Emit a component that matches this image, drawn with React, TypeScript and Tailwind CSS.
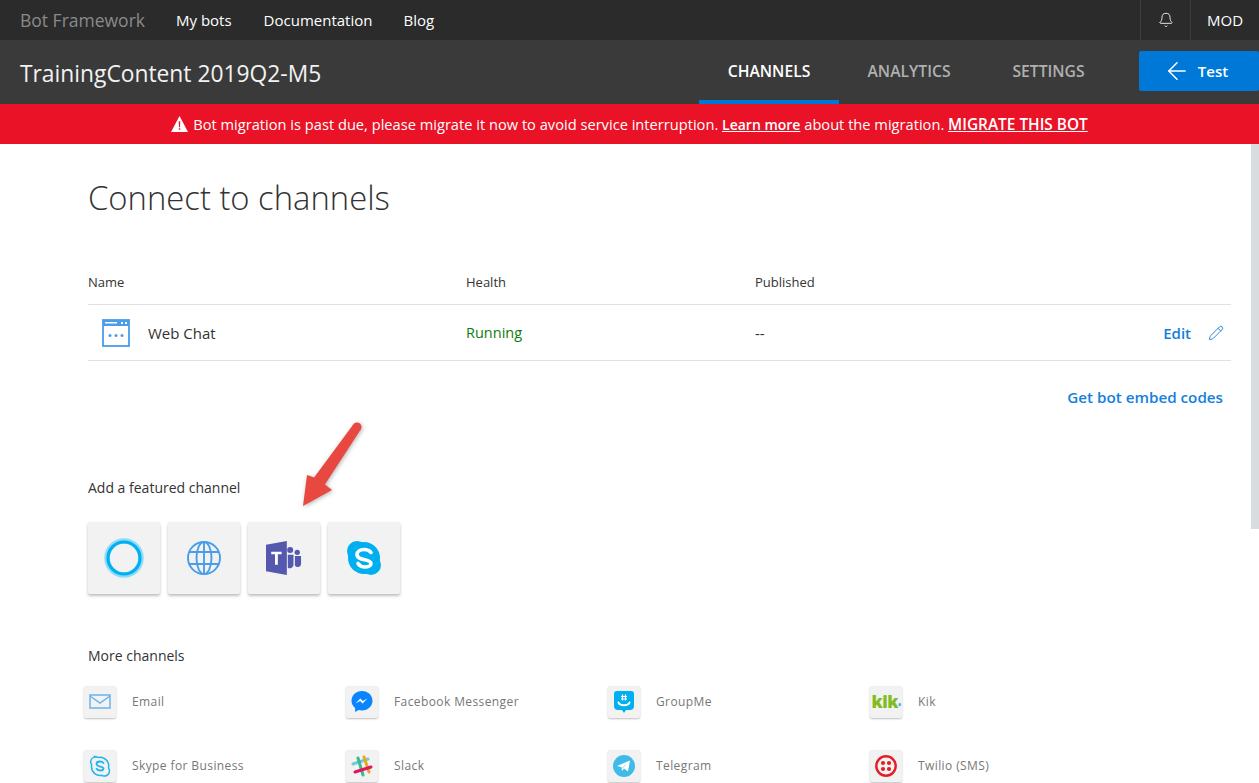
import React from "react";
import { ArrowLeft, Bell, Pencil } from "lucide-react";

const font = "font-['Open_Sans','Noto_Sans',sans-serif]";

function Tile({ children }: { children: React.ReactNode }) {
  return (
    <div className="flex h-[72px] w-[72px] items-center justify-center rounded-[2px] bg-[#f2f2f2] shadow-[0_2px_3px_rgba(0,0,0,0.25)]">
      {children}
    </div>
  );
}

function SmallTile({ children }: { children: React.ReactNode }) {
  return (
    <div className="flex h-8 w-8 shrink-0 items-center justify-center rounded-[2px] bg-[#f2f2f2] shadow-[0_1px_2px_rgba(0,0,0,0.25)]">
      {children}
    </div>
  );
}

function Channel({ name, icon }: { name: string; icon: React.ReactNode }) {
  return (
    <div className="flex h-8 w-[262px] items-center gap-4">
      <SmallTile>{icon}</SmallTile>
      <span className="text-[12px] tracking-[0.4px] text-[#777]">{name}</span>
    </div>
  );
}

const SkypeFilled = () => (
  <svg width="38" height="38" viewBox="0 0 38 38">
    <circle cx="12" cy="12" r="10" fill="#00aff0" />
    <circle cx="26" cy="26" r="10" fill="#00aff0" />
    <circle cx="19" cy="19" r="16" fill="#00aff0" />
    <path d="M26 13.500c-1.500-2-4-3-7-3-4 0-7 2-7 5 0 6.500 14 4 14 9 0 2-2.500 3.500-6 3.500-3 0-5.500-1.200-7-3.500" fill="none" stroke="#fff" strokeWidth="3.600" strokeLinecap="round" />
  </svg>
);

export default function App() {
  return (
    <div className={`${font} flex h-[783px] w-[1259px] flex-col overflow-hidden bg-white`}>
      {/* Top nav */}
      <div className="flex h-10 shrink-0 items-center bg-[#2b2b2b] pl-5 text-[15px] text-white">
        <span className="w-[156px] text-[17.5px] text-[#8a8a8a]">Bot Framework</span>
        <span className="mr-[32px]">My bots</span>
        <span className="mr-[31px]">Documentation</span>
        <span>Blog</span>
        <div className="ml-auto flex h-full">
          <div className="flex w-[51px] items-center justify-center border-x border-[#3d3d3d]">
            <Bell size={16} strokeWidth={1.3} />
          </div>
          <div className="flex w-[68px] items-center justify-center">MOD</div>
        </div>
      </div>

      {/* Bot header */}
      <div className="flex h-16 shrink-0 items-stretch bg-[#3a3a3a] pl-5">
        <div className="flex items-center pt-[4px] text-[22.8px] text-[#f2f2f2]">TrainingContent 2019Q2-M5</div>
        <div className="ml-auto flex text-[15.7px] font-semibold">
          <div className="flex w-[140px] items-center justify-center border-b-4 border-[#0078d7] pt-[4px] text-white">CHANNELS</div>
          <div className="flex w-[140px] items-center justify-center text-[#b0b0b0]">ANALYTICS</div>
          <div className="flex w-[139px] items-center justify-center text-[#b0b0b0]">SETTINGS</div>
        </div>
        <div className="ml-[21px] mt-[11px] flex h-10 w-[120px] items-center justify-center gap-[7px] rounded-[2px] bg-[#0078d7] pr-[7px] text-[15px] font-semibold text-white">
          <ArrowLeft size={28} strokeWidth={1.3} />
          Test
        </div>
      </div>

      {/* Migration banner */}
      <div className="flex h-10 shrink-0 items-center justify-center gap-[5px] bg-[#ea1226] text-[14.65px] text-white">
        <svg width="17" height="16" viewBox="0 0 16 15">
          <path d="M8 0L16 15H0Z" fill="#fff" />
          <path d="M7.300 5h1.400l-.2 5.500h-1zM7.300 11.500h1.400V13H7.300z" fill="#ea1226" />
        </svg>
        <span className="pt-px">
          Bot migration is past due, please migrate it now to avoid service interruption.{" "}
          <span className="text-[14px] font-semibold underline">Learn more</span> about the migration.{" "}
          <span className="text-[15.4px] font-semibold underline">MIGRATE THIS BOT</span>
        </span>
      </div>

      <div className="flex min-h-0 flex-1">
        <main className="relative min-w-0 flex-1 pl-[88px] pr-[20px]">
          <h1 className="mt-8 text-[32.8px] font-light leading-[44px] text-[#333]">Connect to channels</h1>

          {/* Channels table */}
          <div className="mt-[46px] flex h-[39px] items-center border-b border-[#e1e1e1] pb-[4px] text-[13px] text-[#333]">
            <span className="w-[378px]">Name</span>
            <span className="w-[289px]">Health</span>
            <span>Published</span>
          </div>
          <div className="flex h-14 items-center border-b border-[#e1e1e1] pt-px text-[15px] text-[#333]">
            <div className="flex w-[378px] items-center gap-[18px] pl-[14px]">
              <svg width="28" height="28" viewBox="0 0 28 28">
                <rect x="1" y="1" width="26" height="26" fill="none" stroke="#4a9de8" strokeWidth="1.800" />
                <rect x="1" y="1" width="26" height="6" fill="#4a9de8" />
                <rect x="3" y="3" width="12" height="1.500" fill="#fff" />
                <rect x="19" y="3" width="2" height="2" fill="#fff" />
                <rect x="23" y="3" width="2" height="2" fill="#fff" />
                <circle cx="8" cy="16.500" r="1.500" fill="#4a9de8" />
                <circle cx="14" cy="16.500" r="1.500" fill="#4a9de8" />
                <circle cx="20" cy="16.500" r="1.500" fill="#4a9de8" />
              </svg>
              Web Chat
            </div>
            <span className="w-[289px] text-[14.5px] text-[#107c10]">Running</span>
            <span>--</span>
            <div className="ml-auto flex items-center gap-[17px] pr-[7px] font-semibold text-[#1380dc]">
              <span>Edit</span>
              <Pencil size={16} strokeWidth={1.4} className="text-[#1f82dc]" />
            </div>
          </div>
          <div className="mt-[25px] pr-2 text-right text-[15.2px] font-semibold text-[#1380dc]">Get bot embed codes</div>

          <div className="mt-[68px] text-[14px] text-[#333]">Add a featured channel</div>
          <div className="mt-6 flex gap-2">
            <Tile>
              <svg width="40" height="40" viewBox="0 0 40 40">
                <circle cx="20" cy="20" r="17" fill="none" stroke="#8fdcf8" strokeWidth="5.500" />
                <circle cx="20" cy="20" r="16" fill="none" stroke="#00b0f0" strokeWidth="3.200" />
              </svg>
            </Tile>
            <Tile>
              <svg width="36" height="36" viewBox="0 0 36 36" fill="none" stroke="#4a9de8" strokeWidth="1.900">
                <circle cx="18" cy="18" r="16" />
                <ellipse cx="18" cy="18" rx="7.500" ry="16" />
                <path d="M3.500 12h29M3.500 24h29M18 2v32" />
              </svg>
            </Tile>
            <Tile>
              <svg width="36" height="36" viewBox="0 0 38 36">
                <path d="M0 4L22 0V36L0 32Z" fill="#5558af" />
                <path d="M5.500 11.500h11v2.500h-4v11h-3V14h-4z" fill="#fff" />
                <circle cx="25.500" cy="9.500" r="3.200" fill="#5558af" />
                <circle cx="33" cy="12" r="2.800" fill="#5558af" />
                <path d="M23 14.500h6v11a4 4 0 0 1-6 2.800z" fill="#5558af" />
                <path d="M30.500 16h6.500v8a3.500 3.500 0 0 1-6.500 1.800z" fill="#5558af" />
              </svg>
            </Tile>
            <Tile>
              <SkypeFilled />
            </Tile>
          </div>

          <div className="mt-[51px] text-[14px] text-[#333]">More channels</div>
          <div className="-ml-1 mt-5 grid grid-cols-[262px_262px_262px_262px] gap-y-8">
            <Channel
              name="Email"
              icon={
                <svg width="22" height="16" viewBox="0 0 22 16" fill="none" stroke="#6cb2ec" strokeWidth="1.500">
                  <rect x="1" y="1" width="20" height="13" />
                  <path d="M1 2l10 7 10-7" />
                </svg>
              }
            />
            <Channel
              name="Facebook Messenger"
              icon={
                <svg width="22" height="22" viewBox="0 0 22 22">
                  <path d="M11 0C5 0 .500 4.300.500 9.700c0 3 1.400 5.500 3.600 7.300V21l3.500-2c1 .3 2.200.4 3.400.4 6 0 10.500-4.300 10.500-9.700S17 0 11 0z" fill="#0a84ff" />
                  <path d="M4.500 12.500l4.800-5 2.500 2.500 4.600-2.500-4.800 5-2.500-2.500z" fill="#fff" />
                </svg>
              }
            />
            <Channel
              name="GroupMe"
              icon={
                <svg width="20" height="22" viewBox="0 0 20 22">
                  <path d="M3 0h14a3 3 0 0 1 3 3v12a4 4 0 0 1-4 4h-4l-2 3-2-3H4a4 4 0 0 1-4-4V3a3 3 0 0 1 3-3z" fill="#00aff0" />
                  <path d="M4.500 11.500c1 3.500 10 3.500 11 0" fill="none" stroke="#fff" strokeWidth="2" strokeLinecap="round" />
                  <path d="M8.500 3.500v6M11.500 3.500v6M7 5.500h6M7 8h6" stroke="#fff" strokeWidth="1.200" />
                </svg>
              }
            />
            <Channel
              name="Kik"
              icon={<span className="text-[17px] font-extrabold leading-none tracking-[-0.5px] text-[#82bc23]">kik<span className="text-[8px] text-[#3db8f0]">•</span></span>}
            />
            <Channel
              name="Skype for Business"
              icon={
                <svg width="22" height="22" viewBox="0 0 22 22">
                  <path d="M6 1.500c1.300 0 2.300.5 3 1 .7-.2 1.300-.2 2-.2a8.700 8.700 0 0 1 8.500 10.500c.5 1 1 1.900 1 3a5 5 0 0 1-7.500 4.500 8.700 8.700 0 0 1-10.500-8.500c0-.7 0-1.300.2-2-.5-.7-1-1.700-1-3a5 5 0 0 1 4.800-4.800z" fill="none" stroke="#1fb5ee" strokeWidth="1.500" />
                  <path d="M14.500 8c-.8-1-2-1.500-3.500-1.500-2 0-3.500 1-3.500 2.500 0 3.200 7 2 7 4.500 0 1-1.300 2-3.200 2-1.600 0-2.900-.6-3.700-1.800" fill="none" stroke="#1fb5ee" strokeWidth="1.800" strokeLinecap="round" />
                </svg>
              }
            />
            <Channel
              name="Slack"
              icon={
                <svg width="22" height="22" viewBox="0 0 22 22" strokeWidth="3" strokeLinecap="round">
                  <path d="M2 9L17 4" stroke="#70cadb" />
                  <path d="M7 3l5 17" stroke="#3eb991" />
                  <path d="M13 2l5 15" stroke="#e9a820" />
                  <path d="M4 17l16-5" stroke="#e01563" />
                </svg>
              }
            />
            <Channel
              name="Telegram"
              icon={
                <svg width="22" height="22" viewBox="0 0 22 22">
                  <circle cx="11" cy="11" r="11" fill="#40bbe9" />
                  <path d="M4 11L17 5.500l-2 11-4-3-2 2.500-.5-3.800z" fill="#fff" />
                  <path d="M8.500 12.700L15 7.500l-5 6.200z" fill="#cde8f5" />
                </svg>
              }
            />
            <Channel
              name="Twilio (SMS)"
              icon={
                <svg width="22" height="22" viewBox="0 0 22 22" fill="#e31e26">
                  <circle cx="11" cy="11" r="9.700" fill="none" stroke="#e31e26" strokeWidth="2.400" />
                  <circle cx="8" cy="8" r="2.100" />
                  <circle cx="14" cy="8" r="2.100" />
                  <circle cx="8" cy="14" r="2.100" />
                  <circle cx="14" cy="14" r="2.100" />
                </svg>
              }
            />
          </div>

          {/* Annotation arrow */}
          <svg className="absolute left-[295px] top-[272px] drop-shadow-[1px_1px_2px_rgba(0,0,0,0.3)]" width="75" height="92" viewBox="0 0 75 92">
            <circle cx="62" cy="11" r="4.500" fill="#e8483f" />
            <path d="M65.700 13.500L29.900 68.600 37 74 8 90 12 59 19.100 61.400 58.300 8.500Z" fill="#e8483f" />
          </svg>
        </main>
        {/* Scrollbar */}
        <div className="w-2 shrink-0 bg-white">
          <div className="h-[385px] bg-[#d9dcdf]" />
        </div>
      </div>
    </div>
  );
}
